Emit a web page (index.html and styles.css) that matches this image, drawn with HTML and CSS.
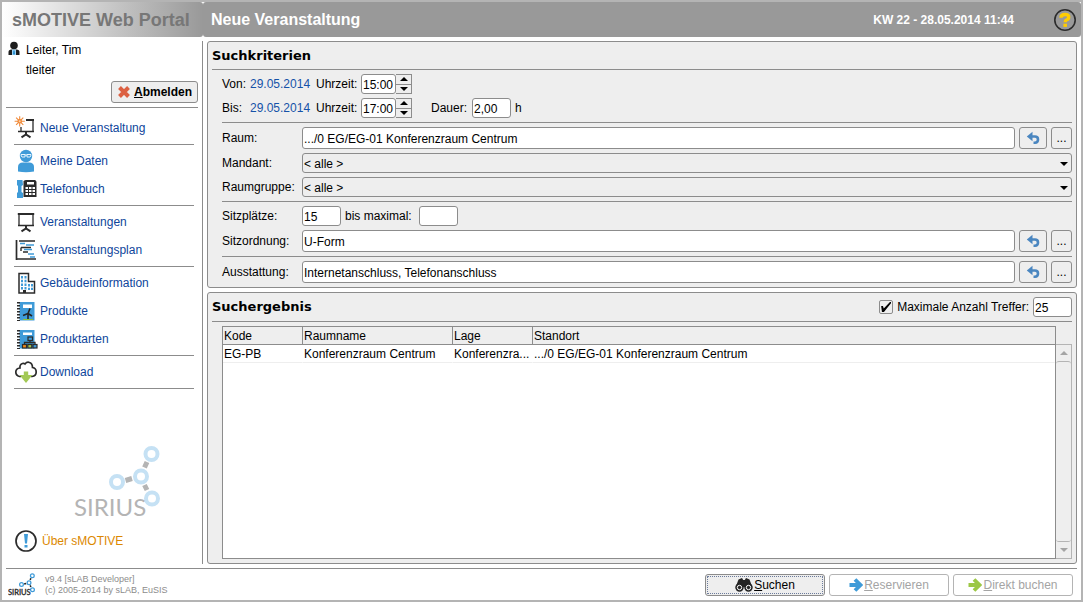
FILE: index.html
```html
<!DOCTYPE html>
<html lang="de">
<head>
<meta charset="utf-8">
<title>sMOTIVE Web Portal</title>
<link rel="stylesheet" href="styles.css">
</head>
<body>
<svg class="defs" aria-hidden="true">
  <symbol id="undo" viewBox="0 0 14 14">
    <path d="M3 5.500H9Q12 5.500 12 8.500T9 11.800H7.500" fill="none" stroke="currentColor" stroke-width="2.600"/>
    <path d="M6.500 .8L6.500 4L6.500 10.200L.8 5.500Z" fill="currentColor"/>
  </symbol>
  <symbol id="board" viewBox="0 0 24 24">
    <path d="M3.800 4H20.200" fill="none" stroke="#2b2b2b" stroke-width="2"/>
    <path d="M5 4V15.500M19 4V15.500M4 15.500H20" fill="none" stroke="#2b2b2b" stroke-width="1.300"/>
    <path d="M12 16V18.500M7.500 21.300L12 18.500L16.500 21.300" fill="none" stroke="#2b2b2b" stroke-width="2"/>
  </symbol>
  <symbol id="molecule" viewBox="0 0 86 72">
    <g class="bonds" fill="none" stroke-width="5">
      <path d="M51.500 34.500L58 32.500M70.500 21.500L73 16M70.500 39L73 44"/>
    </g>
    <g class="atoms" fill="none" stroke-width="4">
      <circle cx="43" cy="36" r="6"/><circle cx="67" cy="30.500" r="6"/><circle cx="77.500" cy="8" r="6"/><circle cx="78" cy="52.500" r="6"/>
    </g>
  </symbol>
</svg>

<div class="app">
  <header class="top">
    <div class="brand">sMOTIVE Web Portal</div>
    <div class="titlebar">
      <h1>Neue Veranstaltung</h1>
      <time>KW 22 - 28.05.2014 11:44</time>
      <button class="help" type="button" aria-label="Hilfe">
        <svg width="24" height="24" viewBox="0 0 24 24"><circle cx="12" cy="12" r="10.200" fill="none" stroke="#2b2b2b" stroke-width="1.600"/><path d="M8 9.800Q8 6.500 12 6.500T15.700 9.200Q15.700 11 13.800 11.800Q12.200 12.500 12.200 14.300" fill="none" stroke="#fc0" stroke-width="3.400"/><path d="M10.400 15.700H14V18.900H10.400Z" fill="#fc0"/></svg>
      </button>
    </div>
  </header>

  <div class="main">
    <aside class="sidebar">
      <div class="user">
        <div class="user-row">
          <svg width="14" height="16" viewBox="0 0 14 16"><circle cx="7" cy="4.500" r="3.800" fill="#1d1d1d"/><path d="M1.500 14V11Q1.500 8.500 4.500 8.500H9.500Q12.500 8.500 12.500 11V14Z" fill="#1d1d1d"/><path d="M5 8.500H9V14H5Z" fill="#9fd4f5"/><path d="M6.300 9.500H7.700L8 13L7 14L6 13Z" fill="#2a8fd0"/></svg>
          <span>Leiter, Tim</span>
        </div>
        <div class="user-row login">tleiter</div>
        <button class="btn logout" type="button">
          <svg width="14" height="14" viewBox="0 0 14 14"><path d="M2.500 2.500L11.500 11.500M11.500 2.500L2.500 11.500" stroke="#dc6042" stroke-width="4"/></svg>
          <span><u>A</u>bmelden</span>
        </button>
      </div>
      <nav>
        <ul>
          <li><a href="#"><svg width="24" height="24" viewBox="0 0 24 24"><path d="M12 4H20" fill="none" stroke="#2b2b2b" stroke-width="2"/><path d="M19 4V15.500M7 11V15.500M4 15.500H20" fill="none" stroke="#2b2b2b" stroke-width="1.300"/><path d="M12 16V18.500M7.500 21.300L12 18.500L16.500 21.300" fill="none" stroke="#2b2b2b" stroke-width="2"/><path d="M5.700 .2V10.400M.6 5.300H10.800M2.100 1.700L9.300 8.900M9.300 1.700L2.100 8.900" stroke="#f08a3a" stroke-width="1.100"/><circle cx="5.700" cy="5.300" r="2.300" fill="#f08a3a"/><circle cx="5.700" cy="5.300" r="1" fill="#ffd0a0"/></svg>Neue Veranstaltung</a></li>
        </ul>
        <ul>
          <li><a href="#"><svg width="24" height="24" viewBox="0 0 24 24"><path d="M4 22.500V18Q4 13.500 9 13.500H15Q20 13.500 20 18V22.500Q12 24 4 22.500Z" fill="#3f9bd8"/><circle cx="12" cy="7" r="6.200" fill="#3f9bd8"/><path d="M7 5.500H11V8H8Q7 7.500 7 5.500ZM13 5.500H17Q17 7.500 16 8H13ZM11 6H13" fill="none" stroke="#e8f6ff" stroke-width="1"/></svg>Meine Daten</a></li>
          <li><a href="#"><svg width="24" height="24" viewBox="0 0 24 24"><path d="M3 3H8.500L9 8L7.500 9V15L9 16V21H3L3 16L4 15V9L3 8Z" fill="#3f9bd8"/><path d="M9.500 4Q11 3 12 3H21Q22.500 4 22.500 5V20H9.500Z" fill="#2b2b2b"/><path d="M13 5H20V7.500H13Z" fill="#fff"/><path d="M11.500 10H14V12H11.500ZM15 10H17.500V12H15ZM18.500 10H21V12H18.500ZM11.500 13H14V15H11.500ZM15 13H17.500V15H15ZM18.500 13H21V15H18.500ZM11.500 16H14V18H11.500ZM15 16H17.500V18H15ZM18.500 16H21V18H18.500Z" fill="#fff"/></svg>Telefonbuch</a></li>
        </ul>
        <ul>
          <li><a href="#"><svg width="24" height="24"><use href="#board"/></svg>Veranstaltungen</a></li>
          <li><a href="#"><svg width="24" height="24" viewBox="0 0 24 24"><path d="M2.500 2V22M1.800 21H22" fill="none" stroke="#2b2b2b" stroke-width="1.700"/><path d="M5 3H21M7 9.500H17M7 9.500V13M9 14H14" fill="none" stroke="#2b2b2b" stroke-width="1.400"/><path d="M6 5.500H11M12 7H20M10 11.500H18M14 16H20M16 19H21" fill="none" stroke="#3f9bd8" stroke-width="1.500"/></svg>Veranstaltungsplan</a></li>
        </ul>
        <ul>
          <li><a href="#"><svg width="24" height="24" viewBox="0 0 24 24"><path d="M5 22V2.500H14.500V10.500H20.500V22Z" fill="#fff" stroke="#2b2b2b" stroke-width="1.500"/><path d="M8 5V19M11.500 5V19M15 13V19M18 13V19" stroke="#3f9bd8" stroke-width="2" stroke-dasharray="2.500 1.200"/><path d="M9 19H12V22H9Z" fill="#2b2b2b"/></svg>Gebäudeinformation</a></li>
          <li><a href="#"><svg width="24" height="24" viewBox="0 0 24 24"><path d="M5.500 3H20.500V21.500H5.500Z" fill="#3f9bd8"/><path d="M4.500 3V22" stroke="#2b2b2b" stroke-width="3" stroke-dasharray="1.500 1.500"/><path d="M9 5.500H18V9H9Z" fill="#fff"/><path d="M14 14.500L16 9.500M14 14.500L9 16.500M14 14.500L18 17M14 14.500V20" stroke="#242424" stroke-width="1.600"/><path d="M9 20.500H19" stroke="#8bbf3c" stroke-width="1"/></svg>Produkte</a></li>
          <li><a href="#"><svg width="24" height="24" viewBox="0 0 24 24"><path d="M5.500 3H20.500V21.500H5.500Z" fill="#3f9bd8"/><path d="M4.500 3V22" stroke="#2b2b2b" stroke-width="3" stroke-dasharray="1.500 1.500"/><path d="M9 5.500H18V8H9Z" fill="#fff"/><path d="M16 13V16M10.500 18V15.500H21V18" fill="none" stroke="#2b2b2b" stroke-width="1.300"/><g stroke="#2b2b2b" stroke-width="1.200"><rect x="14" y="10" width="4.500" height="3.500" fill="#3f9bd8"/><rect x="8.500" y="17.500" width="4" height="3.500" fill="#f08a1a"/><rect x="13.800" y="17.500" width="4" height="3.500" fill="#a4c64a"/><rect x="19" y="17.500" width="4" height="3.500" fill="#3f9bd8"/></g></svg>Produktarten</a></li>
        </ul>
        <ul>
          <li><a href="#"><svg width="24" height="24" viewBox="0 0 24 24"><path d="M7 16.500H5.500Q1.800 15.500 1.800 12T6 8Q5.500 4.500 8.500 3.500Q10 3 11 4Q13 1.500 15.500 2.500Q18.500 3.500 18.500 7.500Q22.200 8 22.200 12T18 16.500H17" fill="#fff" stroke="#2b2b2b" stroke-width="1.700"/><path d="M9.800 11.500H14.200V15H18.500L12 23L5.500 15H9.800Z" fill="#a3c955"/></svg>Download</a></li>
        </ul>
      </nav>
      <div class="about">
        <svg class="sirius" width="86" height="72" viewBox="0 0 86 72"><use href="#molecule"/><text x="0" y="70">SIRIUS</text></svg>
        <a class="about-link" href="#"><svg width="24" height="24" viewBox="0 0 24 24"><circle cx="12" cy="12" r="10" fill="#fff" stroke="#2b2b2b" stroke-width="1.700"/><path d="M10 5H14L13 14.500H11ZM10.500 16H13.500V18.500H10.500Z" fill="#3f9bd8"/></svg>Über sMOTIVE</a>
      </div>
    </aside>

    <main class="content">
      <section class="panel">
        <div class="panel-head"><h2>Suchkriterien</h2></div>
        <form class="criteria">
          <div class="row">
            <span class="when">Von:</span>
            <a class="date" href="#">29.05.2014</a>
            <label for="von">Uhrzeit:</label>
            <div class="spinner">
              <input id="von" class="field" type="text" value="15:00">
              <div class="steps"><button type="button" aria-label="Später"></button><button type="button" class="down" aria-label="Früher"></button></div>
            </div>
          </div>
          <div class="row">
            <span class="when">Bis:</span>
            <a class="date" href="#">29.05.2014</a>
            <label for="bis">Uhrzeit:</label>
            <div class="spinner">
              <input id="bis" class="field" type="text" value="17:00">
              <div class="steps"><button type="button" aria-label="Später"></button><button type="button" class="down" aria-label="Früher"></button></div>
            </div>
            <label class="duration" for="dauer">Dauer:</label>
            <input id="dauer" class="field short" type="text" value="2,00">
            <span>h</span>
          </div>
          <hr>
          <div class="row">
            <label class="name" for="raum">Raum:</label>
            <input id="raum" class="field wide" type="text" value=".../0 EG/EG-01 Konferenzraum Centrum">
            <button class="btn reset" type="button" aria-label="Zurücksetzen"><svg width="14" height="14"><use href="#undo"/></svg></button>
            <button class="btn more" type="button">...</button>
          </div>
          <div class="row">
            <label class="name" for="mandant">Mandant:</label>
            <div class="select"><select id="mandant"><option>&lt; alle &gt;</option></select></div>
          </div>
          <div class="row">
            <label class="name" for="gruppe">Raumgruppe:</label>
            <div class="select"><select id="gruppe"><option>&lt; alle &gt;</option></select></div>
          </div>
          <hr>
          <div class="row">
            <label class="name" for="plaetze">Sitzplätze:</label>
            <input id="plaetze" class="field short" type="text" value="15">
            <label class="upto" for="maximal">bis maximal:</label>
            <input id="maximal" class="field short" type="text">
          </div>
          <div class="row">
            <label class="name" for="ordnung">Sitzordnung:</label>
            <input id="ordnung" class="field wide" type="text" value="U-Form">
            <button class="btn reset" type="button" aria-label="Zurücksetzen"><svg width="14" height="14"><use href="#undo"/></svg></button>
            <button class="btn more" type="button">...</button>
          </div>
          <hr>
          <div class="row">
            <label class="name" for="ausstattung">Ausstattung:</label>
            <input id="ausstattung" class="field wide" type="text" value="Internetanschluss, Telefonanschluss">
            <button class="btn reset" type="button" aria-label="Zurücksetzen"><svg width="14" height="14"><use href="#undo"/></svg></button>
            <button class="btn more" type="button">...</button>
          </div>
        </form>
      </section>

      <section class="panel results">
        <div class="panel-head">
          <h2>Suchergebnis</h2>
          <input id="limit" class="check" type="checkbox" checked>
          <label for="limit">Maximale Anzahl Treffer:</label>
          <input class="field short" type="text" value="25" aria-label="Anzahl">
        </div>
        <div class="grid">
          <div class="sheet">
            <table>
              <colgroup><col class="c-code"><col class="c-room"><col class="c-site"><col></colgroup>
              <thead><tr><th>Kode</th><th>Raumname</th><th>Lage</th><th>Standort</th></tr></thead>
              <tbody><tr><td>EG-PB</td><td>Konferenzraum Centrum</td><td>Konferenzra...</td><td>.../0 EG/EG-01 Konferenzraum Centrum</td></tr></tbody>
            </table>
          </div>
          <div class="scrollbar">
            <button type="button" aria-label="Nach oben"></button>
            <div class="thumb"></div>
            <button type="button" class="down" aria-label="Nach unten"></button>
          </div>
        </div>
      </section>
    </main>
  </div>

  <footer class="bottom">
    <svg class="sirius-small" width="27" height="23" viewBox="0 0 86 73"><use href="#molecule"/><text x="0" y="70">SIRIUS</text></svg>
    <p>v9.4 [sLAB Developer]<br>(c) 2005-2014 by sLAB, EuSIS</p>
    <div class="actions">
      <button class="btn search" type="button"><svg width="18" height="16" viewBox="0 0 18 16"><path d="M3.500 2.500L7 1L8.200 3H9.800L11 1L14.500 2.500L17.300 10H.7Z" fill="#242424"/><circle cx="4.500" cy="10.500" r="4.200" fill="#242424"/><circle cx="13.500" cy="10.500" r="4.200" fill="#242424"/><path d="M8 6H10V10H8Z" fill="#242424"/><circle cx="4.500" cy="10.500" r="2.200" fill="none" stroke="#fff" stroke-width="1"/><circle cx="13.500" cy="10.500" r="2.200" fill="none" stroke="#fff" stroke-width="1"/></svg><span><u>S</u>uchen</span></button>
      <button class="btn" type="button" disabled><svg width="14" height="14" viewBox="0 0 14 14"><path d="M.5 7H10M6 1.500L11.500 7L6 12.500" fill="none" stroke="#3f9bd8" stroke-width="3.800"/></svg><span><u>R</u>eservieren</span></button>
      <button class="btn" type="button" disabled><svg width="14" height="14" viewBox="0 0 14 14"><path d="M.5 7H10M6 1.500L11.500 7L6 12.500" fill="none" stroke="#9cc745" stroke-width="3.800"/></svg><span><u>D</u>irekt buchen</span></button>
    </div>
  </footer>
</div>
</body>
</html>
```
FILE: styles.css
```css
* { box-sizing: border-box; }

body {
  margin: 0;
  font: 12px/16px "Liberation Sans", Arial, sans-serif;
  color: #000;
  background: #fff;
}

button, input, select { font: inherit; color: inherit; }
svg { flex: none; display: block; }
a { color: #0e459b; text-decoration: none; }
.defs { position: absolute; width: 0; height: 0; }

.app {
  display: flex;
  flex-direction: column;
  min-height: 100vh;
  border: 2px solid #b4b4b4;
}

/* header */
.top { display: flex; height: 35px; }
.brand {
  width: 201px;
  padding-left: 10px;
  border-radius: 0 3px 3px 0;
  background: linear-gradient(90deg, #fff, #999);
  color: #777;
  font-size: 18px;
  font-weight: bold;
  line-height: 36px;
  white-space: nowrap;
}
.titlebar {
  flex: 1;
  display: flex;
  align-items: center;
  padding: 0 4px 0 8px;
  border-radius: 3px;
  background: #999;
  color: #fff;
}
h1 { flex: 1; margin: 0; font-size: 16px; line-height: 20px; }
time { font-weight: bold; }
.help { margin-left: 39px; padding: 0; border: 0; background: none; }

/* layout */
.main { flex: 1; display: flex; gap: 4px; padding: 4px 4px 4px 0; }
.sidebar {
  width: 201px;
  display: flex;
  flex-direction: column;
  border-right: 1px solid #8c8c8c;
}
.content { flex: 1; min-width: 0; display: flex; flex-direction: column; gap: 4px; }

/* sidebar */
.user {
  display: flex;
  flex-direction: column;
  gap: 2px;
  margin: 0 4px;
  padding-bottom: 4px;
  border-bottom: 1px solid #8c8c8c;
}
.user-row { display: flex; gap: 5px; padding-left: 1px; line-height: 18px; }
.login { padding-left: 20px; }

.btn {
  display: flex;
  align-items: center;
  justify-content: center;
  height: 22px;
  padding: 0;
  border: 1px solid #8c8c8c;
  border-radius: 3px;
  background: #eee;
}
.logout { align-self: flex-end; width: 87px; gap: 3px; font-weight: bold; }

nav { padding: 6px 8px 0 12px; }
nav ul {
  margin: 0 0 2px;
  padding: 0 0 2px;
  border-bottom: 1px solid #8c8c8c;
  list-style: none;
}
nav a { display: flex; align-items: center; gap: 2px; height: 28px; }

.about { margin-top: auto; padding: 0 0 11px 12px; }
.sirius { margin: 0 0 11px 60px; }
.sirius text, .sirius-small text { font-family: Lato, sans-serif; font-size: 24px; }
.sirius text { fill: #b4b4b4; }
.sirius .atoms, .sirius use { stroke: #c5e1f4; }
.sirius { color: #b4b4b4; }
.bonds { stroke: currentColor; }
.about-link { display: flex; align-items: center; gap: 4px; color: #dc8800; }

/* panels */
.panel {
  padding: 0 4px 4px;
  border: 1px solid #8c8c8c;
  border-radius: 3px;
  background: #eee;
}
.panel-head {
  display: flex;
  align-items: center;
  gap: 4px;
  height: 28px;
  border-bottom: 1px solid #8c8c8c;
}
h2 { flex: 1; margin: 0; font: bold 13px/16px "DejaVu Sans", sans-serif; }

.criteria { display: flex; flex-direction: column; gap: 4px; padding: 4px 0 0 10px; }
.criteria hr { width: 100%; height: 1px; margin: 0; border: 0; background: #8c8c8c; }
.row { display: flex; align-items: center; gap: 4px; }
.name { width: 76px; white-space: nowrap; }
.when { width: 24px; }
.date { width: 62px; color: #1552a8; }
.row label[for="von"], .row label[for="bis"] { width: 41px; }

.field {
  height: 20px;
  min-width: 0;
  padding: 1px 1px 0;
  border: 1px solid #8c8c8c;
  border-radius: 3px;
  background: #fff;
}
.short { width: 39px; }
.wide { flex: 1; height: 22px; }
.upto { width: 70px; }
.duration { width: 37px; margin-left: 15px; }
.reset { width: 28px; color: #4a86c0; }
.more { width: 21px; }

.spinner { display: flex; }
.spinner .field { width: 35px; }
.steps { display: flex; flex-direction: column; width: 16px; height: 20px; border: 1px solid #8c8c8c; border-left: 0; }
.steps button {
  display: flex;
  flex: 1;
  align-items: center;
  justify-content: center;
  padding: 0;
  border: 0;
  background: none;
}
.steps .down { border-top: 1px solid #8c8c8c; }
.steps button::before, .scrollbar button::before {
  content: "";
  border: 4px solid transparent;
  border-top: 0;
  border-bottom: 4px solid #000;
}
.steps .down::before, .scrollbar .down::before { transform: rotate(180deg); }

.select { position: relative; flex: 1; }
.select::after {
  content: "";
  position: absolute;
  right: 4px;
  top: 9px;
  border: 4px solid transparent;
  border-top-color: #000;
  border-bottom: 0;
  pointer-events: none;
}
select {
  appearance: none;
  display: block;
  width: 100%;
  height: 20px;
  padding: 1px 1px 0;
  border: 1px solid #8c8c8c;
  border-radius: 3px;
  background: #eee;
}

/* results */
.results { flex: 1; display: flex; flex-direction: column; }
.results .panel-head { height: 29px; }
.check {
  appearance: none;
  width: 14px;
  height: 14px;
  margin: 0;
  border: 1px solid #8c8c8c;
  border-radius: 2px;
  background: #eee;
}
.check:checked::before {
  content: "";
  display: block;
  width: 10px;
  height: 10px;
  margin: 1px;
  background: #000;
  clip-path: polygon(0 40%, 18% 40%, 26% 66%, 88% 0, 100% 0, 100% 10%, 28% 100%, 8% 100%);
}
.grid { flex: 1; display: flex; padding: 4px 0 0 10px; }
.sheet { flex: 1; min-width: 0; border: 1px solid #8c8c8c; background: #fff; }
table { width: 100%; table-layout: fixed; border-collapse: separate; border-spacing: 0; }
.c-code, .c-site { width: 80px; }
.c-room { width: 150px; }
th, td {
  height: 18px;
  padding: 1px 1px 0;
  overflow: hidden;
  border-right: 1px solid transparent;
  border-bottom: 1px solid #eee;
  font-weight: normal;
  text-align: left;
  text-overflow: ellipsis;
  white-space: nowrap;
}
th { border-color: #8c8c8c; background: #eee; }
th:last-child { border-right: 0; }

.scrollbar { display: flex; flex-direction: column; width: 16px; margin-top: 18px; border: 1px solid #b4b4b4; border-left: 0; }
.scrollbar button {
  display: flex;
  align-items: center;
  justify-content: center;
  height: 16px;
  padding: 0;
  border: 0;
  background: none;
}
.scrollbar button::before { border-bottom-color: #a4a4a4; }
.thumb { flex: 1; border: solid #b4b4b4; border-width: 1px 0; border-radius: 3px; }

/* footer */
.bottom {
  display: flex;
  align-items: center;
  margin: 0 4px;
  padding: 4px 4px 4px 2px;
  border-top: 1px solid #8c8c8c;
}
.sirius-small { color: #242424; stroke: #3f9bd8; }
.sirius-small text { fill: #242424; stroke: #242424; stroke-width: 1px; }
.bottom p { flex: 1; margin: 0 0 0 10px; color: #8c8c8c; font-size: 9px; line-height: 11px; }
.actions { display: flex; gap: 4px; }
.actions .btn { width: 120px; gap: 1px; }
.actions .btn:disabled { border-color: #b4b4b4; background: #fff; color: #a4a4a4; }
.actions .search { outline: 1px dotted #6c7c9c; outline-offset: -3px; }
```
